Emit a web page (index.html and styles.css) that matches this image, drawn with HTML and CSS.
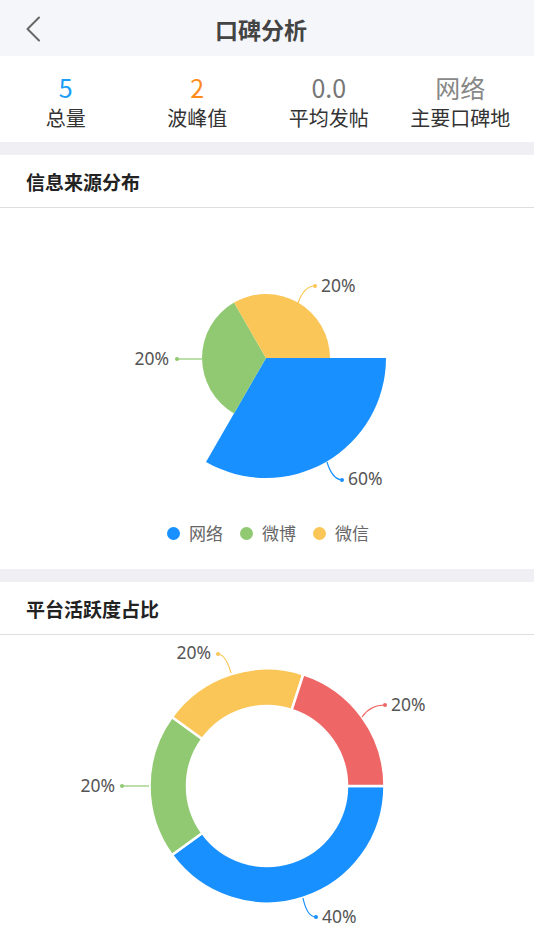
FILE: index.html
```html
<!DOCTYPE html>
<html lang="zh-CN">
<head>
<meta charset="utf-8">
<title>口碑分析</title>
<link rel="stylesheet" href="styles.css">
</head>
<body>
<div class="page">
  <header class="topbar">
    <div class="back">
      <svg width="16" height="26" viewBox="0 0 16 26"><path d="M14 1.5 L2.5 13 L14 24.5" fill="none" stroke="#666" stroke-width="2" stroke-linecap="round" stroke-linejoin="round"/></svg>
    </div>
    <h1 class="title">口碑分析</h1>
    <div class="spacer"></div>
  </header>

  <section class="stats">
    <div class="stat"><div class="num blue">5</div><div class="label">总量</div></div>
    <div class="stat"><div class="num orange">2</div><div class="label">波峰值</div></div>
    <div class="stat"><div class="num gray">0.0</div><div class="label">平均发帖</div></div>
    <div class="stat"><div class="num light">网络</div><div class="label">主要口碑地</div></div>
  </section>

  <section class="card">
    <h2 class="card-title">信息来源分布</h2>
    <div class="chart">
      <svg class="pie" width="534" height="310" viewBox="0 0 534 310">
        <path d="M266,150 L386,150 A120,120 0 0 1 206,253.9 Z" fill="#1890ff"/>
        <path d="M266,150 L234,205.4 A64,64 0 0 1 234,94.6 Z" fill="#90c972"/>
        <path d="M266,150 L234,94.6 A64,64 0 0 1 330,150 Z" fill="#fac657"/>
        <path d="M298,95 Q304,78 315,78" fill="none" stroke="#fac657" stroke-width="1.2"/>
        <circle cx="315" cy="78" r="2" fill="#fac657"/>
        <path d="M202,151 L177,151" fill="none" stroke="#90c972" stroke-width="1.2"/>
        <circle cx="177" cy="151" r="2" fill="#90c972"/>
        <path d="M327,254 Q332,271 342,272" fill="none" stroke="#1890ff" stroke-width="1.2"/>
        <circle cx="342" cy="272" r="2" fill="#1890ff"/>
        <text class="lbl" x="321" y="84">20%</text>
        <text class="lbl" x="169" y="157" text-anchor="end">20%</text>
        <text class="lbl" x="348" y="277">60%</text>
      </svg>
      <ul class="legend">
        <li><span class="dot c-blue"></span>网络</li>
        <li><span class="dot c-green"></span>微博</li>
        <li><span class="dot c-yellow"></span>微信</li>
      </ul>
    </div>
  </section>

  <section class="card">
    <h2 class="card-title">平台活跃度占比</h2>
    <div class="chart">
      <svg class="donut" width="534" height="320" viewBox="0 0 534 320">
        <g stroke="#fff" stroke-width="2.5" stroke-linejoin="round">
          <path d="M384.5,151 A117.5,117.5 0 0 1 171.94,220.06 L202.28,198.02 A80,80 0 0 0 347,151 Z" fill="#1890ff"/>
          <path d="M171.94,220.06 A117.5,117.5 0 0 1 171.94,81.94 L202.28,103.98 A80,80 0 0 0 202.28,198.02 Z" fill="#90c972"/>
          <path d="M171.94,81.94 A117.5,117.5 0 0 1 303.31,39.25 L291.72,74.91 A80,80 0 0 0 202.28,103.98 Z" fill="#fac657"/>
          <path d="M303.31,39.25 A117.5,117.5 0 0 1 384.5,151 L347,151 A80,80 0 0 0 291.72,74.91 Z" fill="#ee6666"/>
        </g>
        <path d="M231,38 Q226,20 218,19" fill="none" stroke="#fac657" stroke-width="1.2"/>
        <circle cx="218" cy="19" r="2" fill="#fac657"/>
        <path d="M362,82 Q370,70 385,70" fill="none" stroke="#ee6666" stroke-width="1.2"/>
        <circle cx="385" cy="70" r="2" fill="#ee6666"/>
        <path d="M149,151 L122,151" fill="none" stroke="#90c972" stroke-width="1.2"/>
        <circle cx="122" cy="151" r="2" fill="#90c972"/>
        <path d="M303,263 Q307,282 316,282" fill="none" stroke="#1890ff" stroke-width="1.2"/>
        <circle cx="316" cy="282" r="2" fill="#1890ff"/>
        <text class="lbl" x="211" y="24" text-anchor="end">20%</text>
        <text class="lbl" x="391" y="76">20%</text>
        <text class="lbl" x="115" y="157" text-anchor="end">20%</text>
        <text class="lbl" x="322" y="288">40%</text>
      </svg>
    </div>
  </section>
</div>
</body>
</html>
```

FILE: styles.css
```css
* { box-sizing: border-box; }
html, body { margin: 0; padding: 0; }
body {
  background: #efeff4;
  font-family: "Noto Sans CJK SC", "Noto Sans", sans-serif;
  color: #333;
}
.page { width: 534px; }

.topbar {
  height: 56px;
  background: #f5f6fa;
  display: grid;
  grid-template-columns: 80px 1fr 92px;
  align-items: center;
}
.back {
  padding-left: 25px;
  display: flex;
  align-items: center;
  height: 56px;
}
.title {
  margin: 0;
  text-align: center;
  font-size: 23px;
  font-weight: 700;
  color: #444;
  line-height: 56px;
  padding-top: 1px;
}

.stats {
  background: #fff;
  display: grid;
  grid-template-columns: repeat(4, 1fr);
  padding: 15px 8px 10px 0;
  margin-bottom: 13px;
}
.stat { text-align: center; }
.num {
  font-size: 25px;
  line-height: 32px;
}
.num.blue { color: #1a9df5; }
.num.orange { color: #ff8c1a; }
.num.gray { color: #777; }
.num.light { color: #888; }
.label {
  font-size: 20px;
  line-height: 29px;
  color: #333;
}

.card {
  background: #fff;
  margin-bottom: 13px;
}
.card-title {
  margin: 0;
  padding: 15px 26px 13px;
  font-size: 19px;
  line-height: 24px;
  font-weight: 700;
  color: #222;
  border-bottom: 1px solid #dedede;
}
.chart svg { display: block; }
.lbl {
  font-family: "Noto Sans", "Noto Sans CJK SC", sans-serif;
  font-size: 17.5px;
  fill: #555;
}

.legend {
  list-style: none;
  margin: 0;
  height: 51px;
  display: flex;
  justify-content: center;
  align-items: center;
  gap: 17px;
  padding: 0 0 21px 2px;
}
.legend li {
  display: flex;
  align-items: center;
  gap: 9px;
  font-size: 17px;
  color: #666;
  line-height: 30px;
}
.dot {
  width: 13px;
  height: 13px;
  border-radius: 50%;
  display: inline-block;
}
.c-blue { background: #1890ff; }
.c-green { background: #90c972; }
.c-yellow { background: #fac657; }
```
